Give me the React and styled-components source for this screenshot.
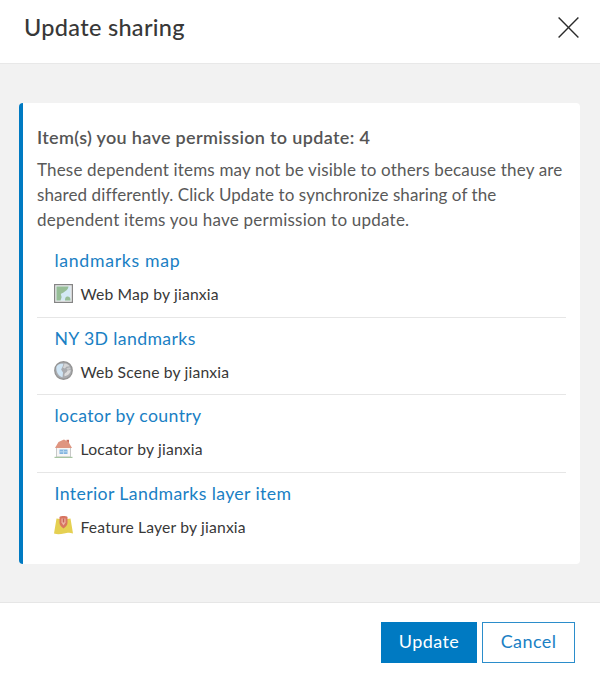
import React from 'react';
import styled, { createGlobalStyle } from 'styled-components';

const GlobalStyle = createGlobalStyle`
  * {
    box-sizing: border-box;
  }

  body {
    margin: 0;
    background: #fff;
    font-family: Lato, 'Liberation Sans', sans-serif;
    color: #383838;
  }
`;

const Dialog = styled.div`
  display: flex;
  flex-direction: column;
  width: 600px;
  height: 680px;
  background: #fff;
`;

const Header = styled.header`
  display: flex;
  align-items: center;
  justify-content: space-between;
  height: 63px;
  padding: 0 21px 9px 24px;
`;

const Title = styled.h1`
  margin: 0;
  font-size: 23.5px;
  line-height: 30px;
  font-weight: 500;
  letter-spacing: 0.3px;
`;

const CloseButton = styled.button`
  display: flex;
  padding: 0;
  border: 0;
  background: none;
  cursor: pointer;
`;

const Body = styled.main`
  height: 540px;
  padding: 39px 20px 38px 19px;
  background: #f2f2f2;
  border-top: 1px solid #e8e8e8;
  border-bottom: 1px solid #e6e6e6;
`;

const Panel = styled.section`
  height: 461px;
  padding: 21px 14px 0;
  background: #fff;
  border-left: 4px solid #007ac2;
  border-radius: 4px;
`;

const PanelTitle = styled.h2`
  margin: 0 0 7px;
  font-size: 18px;
  line-height: 26px;
  font-weight: 600;
  letter-spacing: 0.33px;
  color: #555;
`;

const Message = styled.p`
  margin: 0;
  font-size: 17px;
  line-height: 25px;
  color: #595959;
  white-space: nowrap;
`;

const MessageLine = styled.span`
  display: block;
  letter-spacing: ${({ $spacing }) => $spacing}px;
`;

const ItemList = styled.ul`
  margin: 8px 0 0;
  padding: 0;
  list-style: none;
`;

const Item = styled.li`
  height: 77.5px;
  padding: 8px 0 0 17.5px;

  &:first-child {
    height: 76.5px;
  }

  & + & {
    border-top: 1px solid #e6e6e6;
  }
`;

const ItemLink = styled.a`
  display: block;
  width: max-content;
  font-size: 17.7px;
  line-height: 26px;
  letter-spacing: ${({ $spacing }) => $spacing}px;
  color: #1a80c4;
  text-decoration: none;
`;

const ItemInfo = styled.div`
  display: flex;
  align-items: center;
  gap: 7.5px;
  margin: 9px 0 0 -0.5px;
  height: 22px;
  font-size: 15.7px;
  letter-spacing: 0.17px;

  svg {
    position: relative;
    top: -1px;
  }
`;

const Footer = styled.footer`
  display: flex;
  justify-content: flex-end;
  gap: 5px;
  padding: 19px 25px 0 0;
`;

const Button = styled.button`
  width: ${({ $primary }) => ($primary ? 96 : 93)}px;
  height: 41px;
  padding: 0 0 3px;
  border: 1px solid ${({ $primary }) => ($primary ? '#007ac2' : '#2b8dcb')};
  border-radius: 0;
  background: ${({ $primary }) => ($primary ? '#007ac2' : '#fff')};
  color: ${({ $primary }) => ($primary ? '#fff' : '#1a80c4')};
  font-family: inherit;
  font-size: 18px;
  letter-spacing: 0.4px;
  cursor: pointer;
`;

function MapIcon() {
  return (
    <svg width="19" height="19" viewBox="0 0 19 19">
      <rect x="0.6" y="0.6" width="17.8" height="17.8" fill="#e9e9e9" stroke="#858585" strokeWidth="1.2" />
      <rect x="2.5" y="2.5" width="14" height="14" fill="#d3e9f5" />
      <path d="M2.5 2.5h12c-.3 2-1.500 3.500-3 4.500s-2.500 2-4 2.500.500 3 0 4-.5 2-1 3h-4z" fill="#96bd96" />
      <path d="M11 16.500c0-3 1-4.500 3-4s2.500 1.500 2.500 4z" fill="#96bd96" />
    </svg>
  );
}

function GlobeIcon() {
  return (
    <svg width="19" height="19" viewBox="0 0 20 20">
      <circle cx="10" cy="10" r="9.200" fill="#a9abaf" stroke="#949494" strokeWidth="1.4" />
      <path d="M2.500 6C4 3.500 6 3 10 3L9 6 7.500 9l2 3-.5 5C5 16 2 12 2.500 6z" fill="#cfe5f5" />
      <path d="M11 2.500c3 .3 4.500 1.500 5.500 3L13 6l-1.500 2-2-1z" fill="#d4d5d6" />
      <path d="M11 15c-.5-3 2.500-2 3-5l3.500-.5c0 3.500-3 6-6.500 6.500z" fill="#dcdcdc" />
      <path d="M13 7.500l3.500-1 1 2-3 1z" fill="#c8c9cb" />
    </svg>
  );
}

function HouseIcon() {
  return (
    <svg width="19" height="19" viewBox="0 0 19 19">
      <path d="M2.500 8h14v10h-14z" fill="#f7f6f5" stroke="#c8c8c8" />
      <path d="M12.500.8H15V5h-2.500z" fill="#c96f60" />
      <path d="M4.500 3L10 .5 14.500 3 18 9H1z" fill="#df9580" />
      <path d="M5.500 10.500h8V15h-8z" fill="#83b4df" />
      <path d="M9.500 10.500V15M5.500 12.800h8" stroke="#bad9ef" />
      <path d="M.5 18.400h18" stroke="#a6c5a1" strokeWidth="1.2" />
    </svg>
  );
}

function FeatureIcon() {
  return (
    <svg width="19" height="19" viewBox="0 0 19 19">
      <path d="M2.500 2.500l7 1 7-1L19 17.500c-4-1.500-6-.5-9 0s-6 1.500-10 0z" fill="#e5d052" />
      <path d="M5.500 1c1-1.300 7-1.300 8 0v6c0 2-2 4-4 5.500-2-1.500-4-3.500-4-5.500z" fill="#d87561" />
      <path d="M7.500 2.500h4v4l-2 3-2-3z" fill="#efb6a5" />
      <path d="M8.700 2.500h1.600v4H8.700z" fill="#c56359" />
    </svg>
  );
}

const message = [
  { text: 'These dependent items may not be visible to others because they are', spacing: 0.17 },
  { text: 'shared differently. Click Update to synchronize sharing of the', spacing: 0.09 },
  { text: 'dependent items you have permission to update.', spacing: 0.23 },
];

const items = [
  { title: 'landmarks map', info: 'Web Map by jianxia', Icon: MapIcon, spacing: 0.68 },
  { title: 'NY 3D landmarks', info: 'Web Scene by jianxia', Icon: GlobeIcon, spacing: 0.36 },
  { title: 'locator by country', info: 'Locator by jianxia', Icon: HouseIcon, spacing: 0.34 },
  { title: 'Interior Landmarks layer item', info: 'Feature Layer by jianxia', Icon: FeatureIcon, spacing: 0.37 },
];

function SharedItem({ item }) {
  const { title, info, Icon, spacing } = item;
  return (
    <Item>
      <ItemLink href="#" $spacing={spacing}>{title}</ItemLink>
      <ItemInfo>
        <Icon />
        <span>{info}</span>
      </ItemInfo>
    </Item>
  );
}

function App() {
  return (
    <>
      <GlobalStyle />
      <Dialog>
        <Header>
          <Title>Update sharing</Title>
          <CloseButton aria-label="Close">
            <svg width="21" height="21" viewBox="0 0 21 21">
              <path d="M.6.6l19.800 19.800M20.400.6L.6 20.400" stroke="#2b2b2b" strokeWidth="1.4" />
            </svg>
          </CloseButton>
        </Header>
        <Body>
          <Panel>
            <PanelTitle>Item(s) you have permission to update: 4</PanelTitle>
            <Message>
              {message.map((line) => (
                <MessageLine key={line.text} $spacing={line.spacing}>{line.text}</MessageLine>
              ))}
            </Message>
            <ItemList>
              {items.map((item) => (
                <SharedItem key={item.title} item={item} />
              ))}
            </ItemList>
          </Panel>
        </Body>
        <Footer>
          <Button $primary>Update</Button>
          <Button>Cancel</Button>
        </Footer>
      </Dialog>
    </>
  );
}

export default App;
